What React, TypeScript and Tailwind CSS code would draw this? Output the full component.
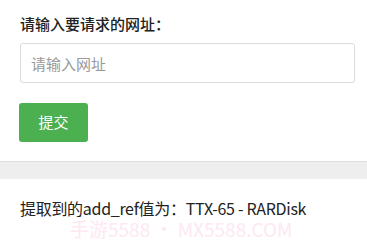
const font = "font-['Noto_Sans_CJK_SC','Noto_Sans',sans-serif]";

const App = () => {
  return (
    <div className={`w-[367px] h-[245px] bg-white overflow-hidden text-[#222] ${font}`}>
      <div className="px-5 pt-[13px]">
        <label className="block text-[15px] leading-[22px] font-medium">请输入要请求的网址：</label>
        <input
          type="text"
          placeholder="请输入网址"
          className="mt-[8px] block w-[335px] h-[40px] rounded-[3px] border border-[#dcdcdc] px-[10px] text-[15px] placeholder:text-[#9a9a9a] outline-none"
        />
        <button className="mt-[20px] -ml-px w-[69px] h-[39px] rounded-[3px] bg-[#4caf50] text-white text-[15px]">
          提交
        </button>
      </div>

      <div className="mt-[19px] h-[18px] border-t border-[#dedede] bg-[#eeeeee]" />

      <div className="relative px-5 pt-[19px]">
        <p className="text-[16px] leading-[20px] tracking-[-0.3px]">提取到的add_ref值为：TTX-65 - RARDisk</p>
        <span className="absolute left-[70px] top-[43px] text-[19px] leading-[14px] text-[#fde8f3] whitespace-nowrap">
          手游5588 • MX5588.COM
        </span>
      </div>
    </div>
  );
};

export default App;
